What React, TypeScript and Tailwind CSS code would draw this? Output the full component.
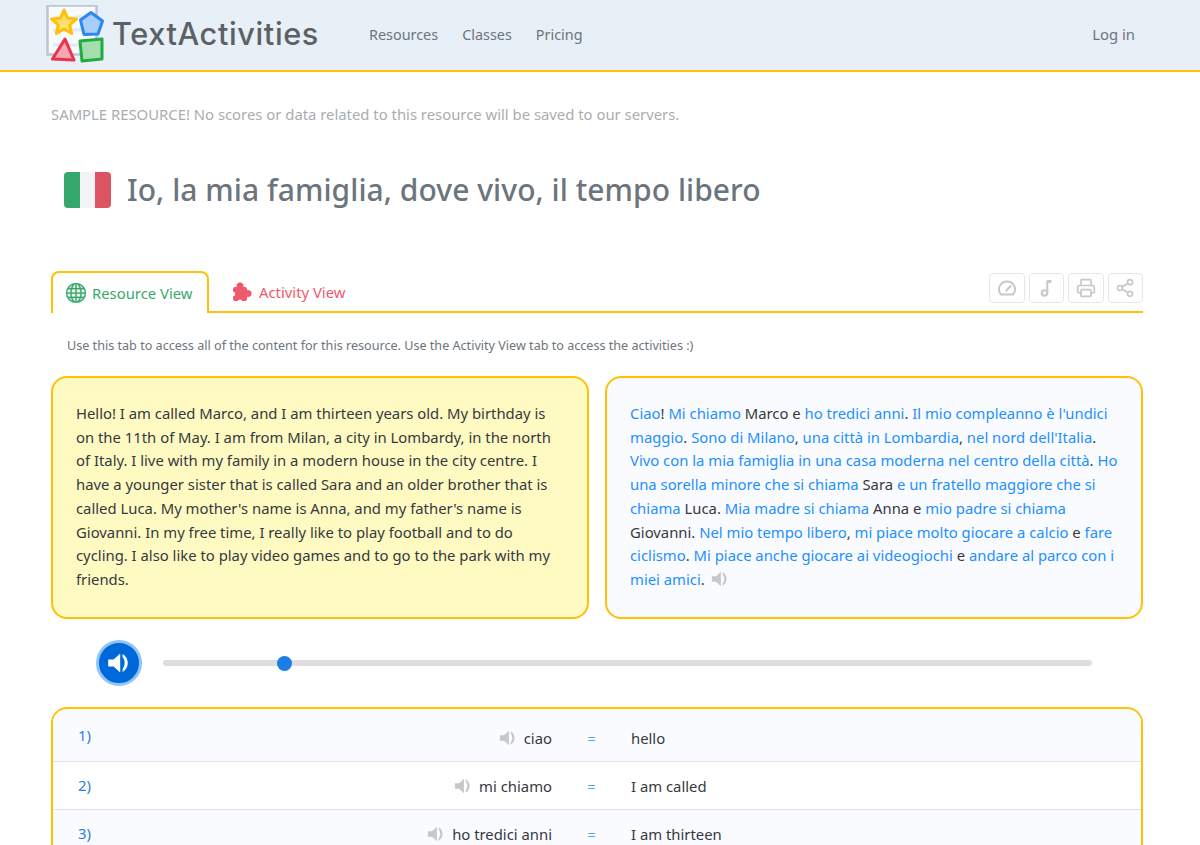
import { BsGlobe } from "react-icons/bs";
import { Printer, Share2 } from "lucide-react";

const englishText =
  "Hello! I am called Marco, and I am thirteen years old. My birthday is on the 11th of May. I am from Milan, a city in Lombardy, in the north of Italy. I live with my family in a modern house in the city centre. I have a younger sister that is called Sara and an older brother that is called Luca. My mother's name is Anna, and my father's name is Giovanni. In my free time, I really like to play football and to do cycling. I also like to play video games and to go to the park with my friends.";

// [text, is it a linked phrase]
const italianText: [string, boolean][] = [
  ["Ciao", true], ["! ", false], ["Mi chiamo", true], [" Marco e ", false], ["ho tredici anni", true], [". ", false],
  ["Il mio compleanno è l'undici maggio", true], [". ", false], ["Sono di Milano", true], [", ", false],
  ["una città in Lombardia", true], [", ", false], ["nel nord dell'Italia", true], [". ", false],
  ["Vivo con la mia famiglia in una casa moderna nel centro della città", true], [". ", false],
  ["Ho una sorella minore che si chiama", true], [" Sara ", false], ["e un fratello maggiore che si chiama", true],
  [" Luca. ", false], ["Mia madre si chiama", true], [" Anna e ", false], ["mio padre si chiama", true],
  [" Giovanni. ", false], ["Nel mio tempo libero", true], [", ", false], ["mi piace molto giocare a calcio", true],
  [" e ", false], ["fare ciclismo", true], [". ", false], ["Mi piace anche giocare ai videogiochi", true],
  [" e ", false], ["andare al parco con i miei amici", true], [". ", false],
];

const phrases = [
  ["ciao", "hello"],
  ["mi chiamo", "I am called"],
  ["ho tredici anni", "I am thirteen"],
];

function Speaker({ className }: { className: string }) {
  return (
    <svg viewBox="0 0 20 20" className={className} fill="currentColor">
      <path d="M1 7h4.500L11 2v16l-5.500-5H1z" />
      <path d="M13 2.500C18.800 6 18.800 14 13 17.500v-2.800C15.300 12.500 15.300 7.500 13 5.300z" />
    </svg>
  );
}

function Logo() {
  return (
    <svg viewBox="0 0 60 60" className="w-[60px] h-[60px] shrink-0">
      <rect x="2.500" y="0.500" width="49" height="49" fill="#f8fafd" stroke="#bcc5d0" strokeWidth="2.500" />
      <path d="M8 25h38M8 40h38M30 12h18" stroke="#dfe9f5" strokeWidth="3" />
      <path d="M19 5l3.500 8.100 8.900.9-6.700 5.900 1.900 8.600-7.600-4.500-7.600 4.500 1.900-8.600L6.600 14l8.900-.9z" fill="#ffdf6e" stroke="#ffc107" strokeWidth="3" strokeLinejoin="round" />
      <path d="M46 7.500L57.500 16 53 29l-14 .5-3.500-14.500z" fill="#a8cdfb" stroke="#2b87f5" strokeWidth="3" strokeLinejoin="round" />
      <path d="M20 34l9 21-21.500-1z" fill="#f6a6b0" stroke="#e8344a" strokeWidth="3" strokeLinejoin="round" />
      <path d="M35 36l22-2 0 20-20 2z" fill="#a6dcae" stroke="#1fae3e" strokeWidth="3" strokeLinejoin="round" />
    </svg>
  );
}

function Puzzle() {
  return (
    <svg viewBox="0 0 20 20" className="w-5 h-5 shrink-0">
      <rect x="1" y="5" width="14" height="14" rx="2" fill="#ee5a6c" />
      <circle cx="8" cy="4" r="3.500" fill="#ee5a6c" />
      <circle cx="16" cy="11.500" r="3.500" fill="#ee5a6c" />
      <circle cx="8" cy="20" r="2.500" fill="#fff" />
      <circle cx="0.500" cy="12" r="2.500" fill="#fff" />
    </svg>
  );
}

function Gauge() {
  return (
    <svg viewBox="0 0 20 20" className="w-5 h-5" fill="none" stroke="currentColor" strokeWidth="2" strokeLinecap="round">
      <path d="M4 16.500h12c4.500-5 1-13-6-13s-10.500 8-6 13z" />
      <path d="M9.500 12.500l4-4.500" />
    </svg>
  );
}

function Note() {
  return (
    <svg viewBox="0 0 20 20" className="w-5 h-5" fill="none" stroke="currentColor" strokeWidth="2">
      <circle cx="8.500" cy="15" r="2.800" />
      <path d="M11.300 15V3" />
      <path d="M11 3.500h4.500" strokeWidth="3" />
    </svg>
  );
}

function ToolButton({ children }: { children: React.ReactNode }) {
  return (
    <button className="w-[35.500px] h-[30px] flex items-center justify-center border border-gray-200 rounded text-[#c8c8c8]">
      {children}
    </button>
  );
}

export default function App() {
  return (
    <div className="h-[845px] overflow-hidden bg-white font-['Noto_Sans',sans-serif] text-[14.850px] text-[#343a40]">
      <header className="h-[72px] bg-[#e7eff7] border-b-2 border-[#ffc107] flex items-center pl-[45px] pr-[65px]">
        <Logo />
        <span className="ml-[7px] w-[257px] pb-[2px] font-['Inter',sans-serif] font-medium text-[30.700px] tracking-[0.6px] text-[#5c6166]">
          TextActivities
        </span>
        <nav className="flex gap-6 text-[14.400px] text-[#6c757d]">
          <a>Resources</a>
          <a>Classes</a>
          <a>Pricing</a>
        </nav>
        <a className="ml-auto pb-[2px] text-[#6c757d]">Log in</a>
      </header>

      <main className="pl-[51px] w-[1143px]">
        <p className="pt-[31px] text-[#a9adb1] leading-[22px]">
          SAMPLE RESOURCE! No scores or data related to this resource will be saved to our servers.
        </p>

        <div className="mt-[45px] ml-[13px] flex items-center gap-4">
          <div className="w-[47px] h-[36px] flex rounded-sm overflow-hidden">
            <div className="flex-1 bg-[#34a76a]" />
            <div className="flex-1 bg-[#f3f3f5]" />
            <div className="flex-1 bg-[#dc5461]" />
          </div>
          <h1 className="text-[30px] font-medium tracking-[0.05px] leading-[40px] text-[#6c757d]">
            Io, la mia famiglia, dove vivo, il tempo libero
          </h1>
        </div>

        <div className="mt-[61px] h-[42px] flex items-start border-b-2 border-[#ffc107]">
          <div className="h-[42px] w-[158px] flex items-center gap-[6px] pl-[13px] bg-white border-2 border-b-0 border-[#ffc107] rounded-t-lg text-[#38a86b]">
            <BsGlobe className="text-xl" stroke="currentColor" strokeWidth="0.3" />
            Resource View
          </div>
          <div className="h-[42px] flex items-center gap-[7px] pl-[23px] text-[#ee5a6c]">
            <Puzzle />
            Activity View
          </div>
          <div className="ml-auto mt-[2px] flex gap-1">
            <ToolButton><Gauge /></ToolButton>
            <ToolButton><Note /></ToolButton>
            <ToolButton><Printer size={20} /></ToolButton>
            <ToolButton><Share2 size={20} /></ToolButton>
          </div>
        </div>

        <p className="mt-[23px] ml-4 text-[12.600px] leading-[20px] text-[#6c757d]">
          Use this tab to access all of the content for this resource. Use the Activity View tab to access the activities :)
        </p>

        <div className="mt-[20px] grid grid-cols-2 gap-4">
          <div className="h-[243px] pl-[23px] pr-6 py-[24px] bg-[#fff9c2] border-2 border-[#ffc107] rounded-2xl leading-[23.700px]">
            {englishText}
          </div>
          <div className="h-[243px] pl-[23px] pr-[21px] py-[24px] bg-[#f9fbff] border-2 border-[#ffc107] rounded-2xl leading-[23.700px]">
            {italianText.map(([text, linked], i) => (
              <span key={i} className={linked ? "text-[#1e90ff]" : ""}>{text}</span>
            ))}
            <Speaker className="inline-block w-[18px] h-[18px] ml-[2px] align-[-3px] text-[#c8c8c8]" />
          </div>
        </div>

        <div className="mt-5 h-[48px] flex items-center pl-[45px]">
          <button className="w-[46px] h-[46px] flex items-center justify-center rounded-full bg-[#0069d9] border-[3px] border-[#90c4f8] text-white">
            <Speaker className="w-[24px] h-[24px]" />
          </button>
          <div className="ml-[21px] w-[929px] h-[6px] bg-[#dedede] rounded-full flex items-center">
            <div className="ml-[114px] w-[15px] h-[15px] rounded-full bg-[#1a7de8]" />
          </div>
        </div>

        <div className="mt-[20px] pt-[5px] bg-[#fafbff] border-2 border-b-0 border-[#ffc107] rounded-t-2xl overflow-hidden">
          {phrases.map(([source, target], i) => (
            <div key={source} className={`h-[48px] pt-[2px] flex items-center border-b border-[#dee2e6] ${i % 2 === 0 ? "bg-[#fafbff]" : "bg-white"}`}>
              <span className={`w-[40px] ml-[25px] text-[#2b7de9] ${i === 0 ? "-mt-[6px]" : "-mt-[2px]"}`}>{i + 1})</span>
              <span className="ml-[-25px] w-[459px] flex items-center justify-end gap-[7px]">
                <Speaker className="w-[18px] h-[18px] text-[#c8c8c8]" />
                {source}
              </span>
              <span className="w-[79px] text-center text-[#5aa5ee]">=</span>
              <span>{target}</span>
            </div>
          ))}
        </div>
      </main>
    </div>
  );
}
